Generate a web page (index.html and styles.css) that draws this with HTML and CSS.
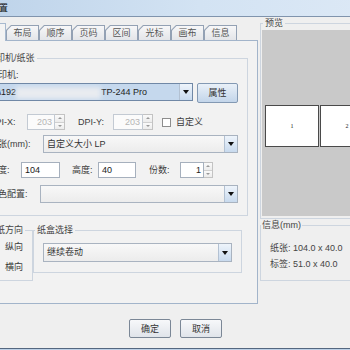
FILE: index.html
```html
<!DOCTYPE html>
<html>
<head>
<meta charset="utf-8">
<link rel="stylesheet" href="styles.css">
</head>
<body>
<div class="win">
  <div class="titlebar"><span class="title">打印设置</span></div>
  <div class="main">
    <div class="tabpane">
      <div class="tabs">
        <div class="tab sel"><span>常规</span></div>
        <div class="tab"><span>布局</span></div>
        <div class="tab"><span>顺序</span></div>
        <div class="tab"><span>页码</span></div>
        <div class="tab"><span>区间</span></div>
        <div class="tab"><span>光标</span></div>
        <div class="tab"><span>画布</span></div>
        <div class="tab"><span>信息</span></div>
      </div>
      <div class="tabbody">
        <fieldset class="grp printer">
          <legend class="lg-printer">打印机/纸张</legend>
          <div class="gbody pbody">
            <div class="lbl-top">打印机:</div>
            <div class="row r-printer">
              <div class="combo hl w-printer">
                <div class="cval">\\192<span class="redact"></span>TP-244 Pro</div>
                <div class="carrow"></div>
              </div>
              <button class="btn attr">属性</button>
            </div>
            <div class="row r-dpi">
              <span class="lbl w38">DPI-X:</span>
              <span class="spin w38s"><span class="sfield dis">203</span><span class="sbtns"><i class="up"></i><i class="dn"></i></span></span>
              <span class="lbl w35 ml13">DPI-Y:</span>
              <span class="spin w40s"><span class="sfield dis">203</span><span class="sbtns"><i class="up"></i><i class="dn"></i></span></span>
              <span class="chk"></span>
              <span class="lbl">自定义</span>
            </div>
            <div class="row r-paper">
              <span class="lbl w54">纸张(mm):</span>
              <div class="combo grow"><div class="cval">自定义大小 LP</div><div class="carrow"></div></div>
            </div>
            <div class="row r-size">
              <span class="lbl w32">宽度:</span>
              <span class="field w39">104</span>
              <span class="lbl w26 ml12">高度:</span>
              <span class="field w38">40</span>
              <span class="lbl w31 ml13">份数:</span>
              <span class="spin w33s"><span class="sfield">1</span><span class="sbtns"><i class="up"></i><i class="dn"></i></span></span>
            </div>
            <div class="row r-color">
              <span class="lbl w51">颜色配置:</span>
              <div class="combo grow"><div class="cval"></div><div class="carrow"></div></div>
            </div>
          </div>
        </fieldset>
        <div class="lower">
          <fieldset class="grp orient">
            <legend class="lg-orient">进纸方向</legend>
            <div class="gbody obody">
              <div class="radio-row"><span class="radio"></span><span>纵向</span></div>
              <div class="radio-row"><span class="radio"></span><span>横向</span></div>
            </div>
          </fieldset>
          <fieldset class="grp tray">
            <legend class="lg-tray">纸盒选择</legend>
            <div class="gbody tbody">
              <div class="combo tray-combo"><div class="cval">继续卷动</div><div class="carrow"></div></div>
            </div>
          </fieldset>
        </div>
      </div>
    </div>
    <div class="side">
      <fieldset class="grp preview">
        <legend class="lg-preview">预览</legend>
        <div class="canvas">
          <div class="page">1</div>
          <div class="page">2</div>
        </div>
      </fieldset>
      <fieldset class="grp info">
        <legend class="lg-info">信息(mm)</legend>
        <div class="gbody ibody">
          <div class="info-row">纸张: 104.0 x 40.0</div>
          <div class="info-row">标签: 51.0 x 40.0</div>
        </div>
      </fieldset>
    </div>
  </div>
  <div class="actions">
    <button class="btn act">确定</button>
    <button class="btn act">取消</button>
  </div>
</div>
</body>
</html>
```

FILE: styles.css
```css
* { box-sizing: border-box; }
html, body { margin: 0; padding: 0; }
body {
  width: 350px;
  height: 350px;
  overflow: hidden;
  background: #bcd0e6;
  font-family: "Liberation Sans", "Noto Sans CJK SC", sans-serif;
  font-size: 9px;
  line-height: 12px;
  color: #3c3c3c;
}
.win {
  margin-left: -31px;
  width: 420px;
  height: 349px;
  background: #efefef;
  border-bottom: 1px solid #54677f;
  display: flex;
  flex-direction: column;
}
.titlebar {
  height: 17px;
  flex: none;
  border-bottom: 1px solid #8094ad;
  background: linear-gradient(to right, #bcd2e9, #d3e3f3 55%, #dde9f6);
  padding-left: 3px;
  display: flex;
  align-items: center;
}
.title { color: #111; }

.main { display: flex; height: 287px; flex: none; }
.tabpane { width: 289px; flex: none; padding-top: 6px; display: flex; flex-direction: column; }
.tabs {
  display: flex;
  align-items: flex-end;
  height: 17px;
  padding-left: 2px;
  position: relative;
  z-index: 1;
}
.tab {
  width: 33px;
  height: 15px;
  flex: none;
  background: #93a1b4;
  clip-path: polygon(5px 0, 100% 0, 100% 100%, 0 100%, 0 5px);
  padding: 1px 1px 0 1px;
}
.tab span {
  display: flex;
  height: 100%;
  align-items: center;
  justify-content: center;
  background: linear-gradient(#f7f7f8, #e3e5e9);
  clip-path: polygon(4.5px 0, 100% 0, 100% 100%, 0 100%, 0 4.5px);
  color: #555;
}
.tab.sel { width: 35px; height: 18px; margin-bottom: -1px; background: #a7b9cf; }
.tab.sel span { background: #f3f3f3; }

.tabbody {
  height: 264px;
  border: 1px solid #a2b4ca;
  background: #f2f2f2;
  padding: 11px 9px 0 10px;
}
fieldset.grp {
  margin: 0;
  padding: 0;
  border: 1px solid #cdd5df;
  min-width: 0;
}
legend {
  padding: 0 2px;
  line-height: 12px;
  color: #444;
}
.lg-printer, .lg-orient { margin-left: 4px; }
.lg-tray { margin-left: 1px; }
.lg-preview { margin-left: 2px; }
.lg-info { margin-left: 0; padding: 0 1px; }

.pbody { padding: 0 9px 12px 8px; }
.lbl-top { margin-top: 5px; height: 12px; }
.row { display: flex; }
.r-printer { margin-top: 2px; height: 20px; align-items: flex-start; gap: 4px; }
.r-dpi { margin-top: 11px; height: 16px; align-items: center; }
.r-paper { margin-top: 5px; height: 18px; align-items: center; }
.r-size { margin-top: 9px; height: 16px; align-items: center; }
.r-color { margin-top: 7px; height: 18px; align-items: center; }

.lbl { flex: none; white-space: nowrap; }
.w26 { width: 26px; } .w31 { width: 31px; } .w32 { width: 32px; }
.w35 { width: 35px; } .w38 { width: 38px; } .w51 { width: 51px; } .w54 { width: 54px; }
.ml12 { margin-left: 12px; } .ml13 { margin-left: 13px; }

.combo {
  display: flex;
  height: 18px;
  border: 1px solid #a9b3c0;
  background: linear-gradient(#f8f8f8, #ececec);
}
.combo.grow { flex: 1; }
.w-printer { width: 204px; flex: none; border-color: #7088a6; background: #c5d8ed; }
.cval {
  flex: 1;
  padding-left: 3px;
  line-height: 16px;
  white-space: nowrap;
  overflow: hidden;
  color: #333;
}
.w-printer .cval { padding-left: 6px; color: #1e1e1e; }
.redact {
  display: inline-block;
  width: 85px;
  height: 12px;
  vertical-align: middle;
  background: #e9ecf0;
  filter: blur(2.5px);
}
.carrow {
  width: 13px;
  flex: none;
  border-left: 1px solid #b3c1d2;
  background: linear-gradient(#eef4fb, #c8daee);
  display: flex;
  align-items: center;
  justify-content: center;
}
.carrow::after {
  content: "";
  border-left: 3.5px solid transparent;
  border-right: 3.5px solid transparent;
  border-top: 4px solid #111;
}
.tray-combo { height: 19px; }

.btn {
  font: inherit;
  padding: 0;
  color: #333;
  border: 1px solid #7b8796;
  border-radius: 2px;
  background: linear-gradient(#f7f8fa, #e0e4ea);
}
.attr { width: 41px; height: 20px; flex: none; border-color: #8399b3; background: linear-gradient(#e9f0f8, #c3d5ea); }

.spin { display: flex; height: 16px; flex: none; }
.w38s { width: 38px; } .w40s { width: 40px; } .w33s { width: 33px; }
.sfield {
  flex: 1;
  border: 1px solid #a6b0bd;
  background: #fff;
  text-align: right;
  padding-right: 2px;
  line-height: 14px;
  color: #222;
}
.sfield.dis { color: #b5b5b5; border-color: #c3cad3; background: #fbfbfb; }
.sbtns {
  width: 10px;
  flex: none;
  display: flex;
  flex-direction: column;
  border: 1px solid #c3c3c3;
  border-left: none;
}
.w33s .sbtns { width: 9px; }
.sbtns i {
  flex: 1;
  display: flex;
  align-items: center;
  justify-content: center;
  background: linear-gradient(#fafafa, #ececec);
}
.sbtns i.up { border-bottom: 1px solid #d0d0d0; }
.sbtns i.up::after {
  content: "";
  border-left: 2px solid transparent;
  border-right: 2px solid transparent;
  border-bottom: 2px solid #999;
}
.sbtns i.dn::after {
  content: "";
  border-left: 2px solid transparent;
  border-right: 2px solid transparent;
  border-top: 2px solid #999;
}
.chk {
  width: 9px;
  height: 9px;
  flex: none;
  margin-left: 9px;
  margin-right: 5px;
  border: 1px solid #8d8d8d;
  background: #fff;
}
.field {
  height: 16px;
  flex: none;
  border: 1px solid #a6b0bd;
  background: #fff;
  padding-left: 3px;
  line-height: 14px;
  color: #1a1a1a;
}
.w39 { width: 39px; }

.lower { display: flex; align-items: flex-start; margin-top: 8px; }
.orient { width: 53px; flex: none; }
.obody { padding: 5px 0 7px 8px; display: flex; flex-direction: column; gap: 8px; }
.radio-row { display: flex; align-items: center; height: 12px; }
.radio {
  width: 10px;
  height: 10px;
  margin-right: 6px;
  border: 1px solid #8d8d8d;
  border-radius: 50%;
  background: #fff;
  flex: none;
}
.tray { width: 209px; flex: none; margin-left: 6px; }
.tbody { padding: 7px 9px 10px 9px; }

.side { margin-left: 2px; width: 125px; flex: none; display: flex; flex-direction: column; }
.preview { margin-top: 9px; }
.canvas {
  margin: 1px 0 2px 1px;
  height: 186px;
  background: #c9c9c9;
  display: flex;
  align-items: center;
  gap: 1px;
  padding: 5px 0 0 3px;
}
.page {
  width: 54px;
  height: 42px;
  flex: none;
  background: #fff;
  border: 1px solid #4a4a4a;
  display: flex;
  align-items: center;
  justify-content: center;
  font-family: "Liberation Serif", serif;
  font-size: 6px;
  color: #222;
}
.info { margin-top: 13px; }
.ibody { padding: 11px 0 10px 9px; display: flex; flex-direction: column; gap: 4px; }
.info-row { height: 12px; color: #444; white-space: nowrap; }

.actions {
  height: 44px;
  flex: none;
  display: flex;
  align-items: flex-start;
  gap: 9px;
  padding: 15px 0 0 160px;
}
.act { width: 42px; height: 19px; }
```
